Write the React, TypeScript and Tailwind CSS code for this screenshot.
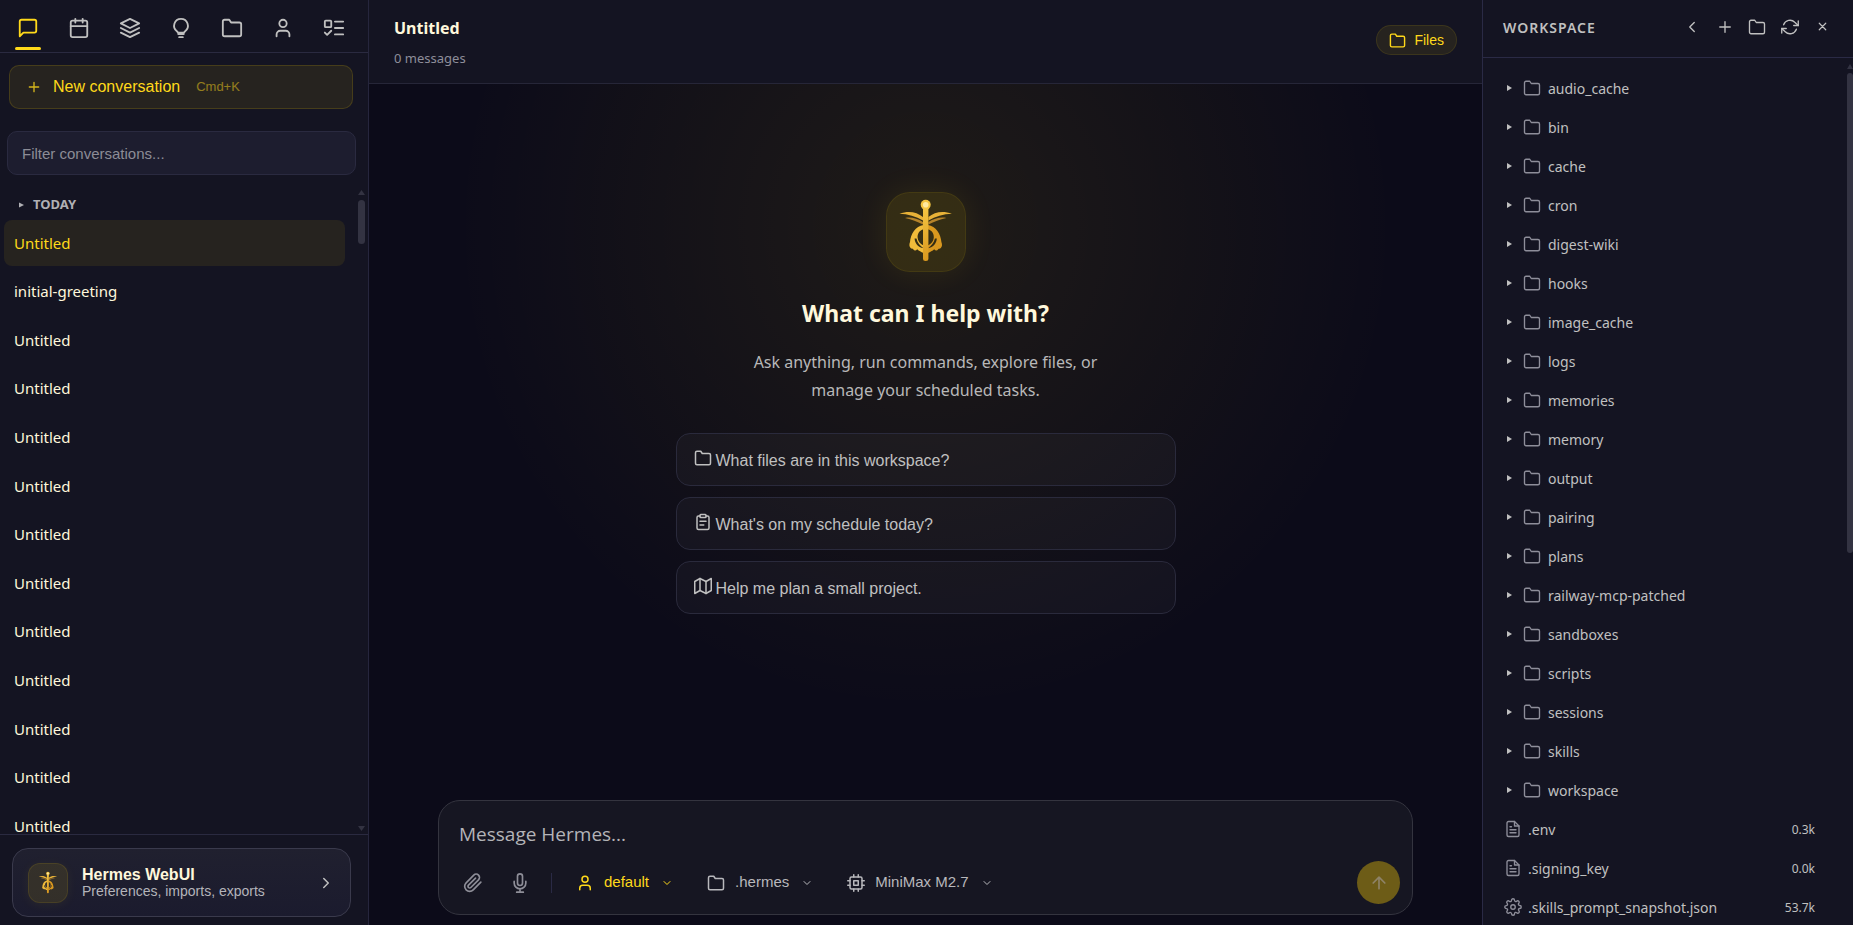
import React, { useState } from "react";

type IconProps = { size?: number; stroke?: number; className?: string; children: React.ReactNode };

function Icon({ size = 18, stroke = 2, className = "", children }: IconProps) {
  return (
    <svg
      width={size}
      height={size}
      viewBox="0 0 24 24"
      fill="none"
      stroke="currentColor"
      strokeWidth={stroke}
      strokeLinecap="round"
      strokeLinejoin="round"
      className={`shrink-0 ${className}`}
      aria-hidden="true"
    >
      {children}
    </svg>
  );
}

const glyph = {
  chat: <path d="M21 15a2 2 0 0 1-2 2H7l-4 4V5a2 2 0 0 1 2-2h14a2 2 0 0 1 2 2z" />,
  calendar: (
    <>
      <rect x="3" y="4" width="18" height="18" rx="2" />
      <path d="M16 2v4M8 2v4M3 10h18" />
    </>
  ),
  layers: (
    <>
      <path d="M12 2 2 7l10 5 10-5z" />
      <path d="m2 12 10 5 10-5" />
      <path d="m2 17 10 5 10-5" />
    </>
  ),
  bulb: (
    <>
      <path d="M10 22h4" />
      <path d="M9 18.5h6" />
      <path d="M12 2a7.5 7.5 0 0 0-4.5 13.5c.6.5 1 1 1 1.5h7c0-.5.4-1 1-1.5A7.5 7.5 0 0 0 12 2z" />
    </>
  ),
  folder: <path d="M22 19a2 2 0 0 1-2 2H4a2 2 0 0 1-2-2V5a2 2 0 0 1 2-2h5l2 3h9a2 2 0 0 1 2 2z" />,
  user: (
    <>
      <path d="M19 21v-2a4 4 0 0 0-4-4H9a4 4 0 0 0-4 4v2" />
      <circle cx="12" cy="7" r="4" />
    </>
  ),
  todo: (
    <>
      <rect x="2" y="4" width="7" height="7" rx="1" />
      <path d="m2 17 2.5 2.5L9 15M13 5h9M13 12h9M13 19h9" />
    </>
  ),
  plus: <path d="M12 5v14M5 12h14" />,
  chevronRight: <path d="m9 18 6-6-6-6" />,
  chevronLeft: <path d="m15 18-6-6 6-6" />,
  chevronDown: <path d="m6 9 6 6 6-6" />,
  refresh: (
    <>
      <path d="M23 4v6h-6M1 20v-6h6" />
      <path d="M3.51 9a9 9 0 0 1 14.85-3.36L23 10M1 14l4.64 4.36A9 9 0 0 0 20.49 15" />
    </>
  ),
  clipboard: (
    <>
      <path d="M16 4h2a2 2 0 0 1 2 2v14a2 2 0 0 1-2 2H6a2 2 0 0 1-2-2V6a2 2 0 0 1 2-2h2" />
      <rect x="8" y="2" width="8" height="4" rx="1" />
      <path d="M8 11h8M8 16h5" />
    </>
  ),
  map: (
    <>
      <path d="M1 6v16l7-4 8 4 7-4V2l-7 4-8-4z" />
      <path d="M8 2v16M16 6v16" />
    </>
  ),
  clip: (
    <path d="m21.44 11.05-9.19 9.19a6 6 0 0 1-8.49-8.49l9.19-9.19a4 4 0 0 1 5.66 5.66l-9.2 9.19a2 2 0 0 1-2.83-2.83l8.49-8.48" />
  ),
  mic: (
    <>
      <path d="M12 1a3 3 0 0 0-3 3v8a3 3 0 0 0 6 0V4a3 3 0 0 0-3-3z" />
      <path d="M19 10v2a7 7 0 0 1-14 0v-2M12 19v4M8 23h8" />
    </>
  ),
  cpu: (
    <>
      <rect x="4" y="4" width="16" height="16" rx="2" />
      <rect x="9" y="9" width="6" height="6" />
      <path d="M9 1v3M15 1v3M9 20v3M15 20v3M20 9h3M20 15h3M1 9h3M1 15h3" />
    </>
  ),
  arrowUp: <path d="M12 19V5M5 12l7-7 7 7" />,
  file: (
    <>
      <path d="M14 2H6a2 2 0 0 0-2 2v16a2 2 0 0 0 2 2h12a2 2 0 0 0 2-2V8z" />
      <path d="M14 2v6h6M16 13H8M16 17H8M10 9H8" />
    </>
  ),
  gear: (
    <>
      <circle cx="12" cy="12" r="3" />
      <path d="M19.4 15a1.65 1.65 0 0 0 .33 1.82l.06.06a2 2 0 1 1-2.83 2.83l-.06-.06a1.65 1.65 0 0 0-1.82-.33 1.65 1.65 0 0 0-1 1.51V21a2 2 0 0 1-4 0v-.09A1.65 1.65 0 0 0 9 19.4a1.65 1.65 0 0 0-1.82.33l-.06.06a2 2 0 1 1-2.83-2.83l.06-.06a1.65 1.65 0 0 0 .33-1.82 1.65 1.65 0 0 0-1.51-1H3a2 2 0 0 1 0-4h.09A1.65 1.65 0 0 0 4.6 9a1.65 1.65 0 0 0-.33-1.82l-.06-.06a2 2 0 1 1 2.83-2.83l.06.06a1.65 1.65 0 0 0 1.82.33H9a1.65 1.65 0 0 0 1-1.51V3a2 2 0 0 1 4 0v.09a1.65 1.65 0 0 0 1 1.51 1.65 1.65 0 0 0 1.82-.33l.06-.06a2 2 0 1 1 2.83 2.83l-.06.06a1.65 1.65 0 0 0-.33 1.82V9a1.65 1.65 0 0 0 1.51 1H21a2 2 0 0 1 0 4h-.09a1.65 1.65 0 0 0-1.51 1z" />
    </>
  ),
};

const snake =
  "M37.5 33C29.5 34 24.5 42.5 24 50c-1 2.5-.8 4.5.6 6 1 .9 2 .4 2.6 1.2 1.2 1.6 2.6 1.6 4 0 1.8 1.6 3.8 2.8 6.3 3.8V53.5C34 52 31.8 49 31.6 45.5 31.4 41.5 33.5 38.2 37.5 37.2zM28.6 46.5c.2 4.8 3.2 8.5 8.9 9.8-3.4-2.6-6.2-5.4-7-9.8z";
const wings = "M13.5 21.8C22 18.4 31 19.8 37 25v3.6C30 24.6 22 22 13.5 21.8z";
const lowerWings = "M19 26c6-1.2 12 .3 18 4v2.6C31 29.6 26 27.4 19 26z";

function Caduceus({ size, id }: { size: number; id: string }) {
  return (
    <svg width={size} height={size} viewBox="0 0 80 80" className="shrink-0" aria-hidden="true">
      <defs>
        <linearGradient id={id} x1="0" y1="0" x2="0" y2="1">
          <stop offset="0" stopColor="#f5c542" />
          <stop offset="1" stopColor="#d9981f" />
        </linearGradient>
      </defs>
      <g>
        <path d={wings} fill="#e8b238" />
        <path d={lowerWings} fill="#b5832a" />
        <path d={snake} fill="#f0bb3a" fillRule="evenodd" />
      </g>
      <g transform="translate(79.4 0) scale(-1 1)">
        <path d={wings} fill="#e8b238" />
        <path d={lowerWings} fill="#b5832a" />
        <path d={snake} fill="#d9981f" fillRule="evenodd" />
      </g>
      <rect x="37" y="15" width="5.4" height="54" rx="2.5" fill={`url(#${id})`} />
      <circle cx="39.7" cy="12.7" r="5" fill="#f5c542" />
      <circle cx="39.7" cy="12.7" r="2.8" fill="#ffe9a0" />
    </svg>
  );
}

const tabs = [
  { label: "Chat", icon: glyph.chat },
  { label: "Tasks", icon: glyph.calendar },
  { label: "Skills", icon: glyph.layers },
  { label: "Memory", icon: glyph.bulb },
  { label: "Spaces", icon: glyph.folder },
  { label: "Profiles", icon: glyph.user },
  { label: "Todos", icon: glyph.todo },
];

const conversations = [
  "Untitled",
  "initial-greeting",
  "Untitled",
  "Untitled",
  "Untitled",
  "Untitled",
  "Untitled",
  "Untitled",
  "Untitled",
  "Untitled",
  "Untitled",
  "Untitled",
  "Untitled",
];

const folders = [
  "audio_cache",
  "bin",
  "cache",
  "cron",
  "digest-wiki",
  "hooks",
  "image_cache",
  "logs",
  "memories",
  "memory",
  "output",
  "pairing",
  "plans",
  "railway-mcp-patched",
  "sandboxes",
  "scripts",
  "sessions",
  "skills",
  "workspace",
];

const files = [
  { name: ".env", size: "0.3k", icon: glyph.file },
  { name: ".signing_key", size: "0.0k", icon: glyph.file },
  { name: ".skills_prompt_snapshot.json", size: "53.7k", icon: glyph.gear },
];

const suggestions = [
  { text: "What files are in this workspace?", icon: glyph.folder },
  { text: "What's on my schedule today?", icon: glyph.clipboard },
  { text: "Help me plan a small project.", icon: glyph.map },
];

const arial = "font-['Liberation_Sans',Arial,sans-serif]";

function Sidebar() {
  const [tab, setTab] = useState(0);
  const [active, setActive] = useState(0);
  return (
    <aside className="flex w-[369px] shrink-0 flex-col border-r border-[#2a2a45]/80 bg-[#141422]">
      <nav className="flex h-[53px] shrink-0 border-b border-[#2a2a40] pr-[9px] pl-0.5">
        {tabs.map((t, i) => (
          <button
            key={t.label}
            aria-label={t.label}
            onClick={() => setTab(i)}
            className={`relative flex flex-1 items-center justify-center pt-1 ${i === tab ? "text-[#ffd91a]" : "text-[#c0c0c0]"}`}
          >
            <Icon size={22}>{t.icon}</Icon>
            {i === tab && <span className="absolute bottom-0.5 h-[3px] w-[26px] rounded-sm bg-[#ffd91a]" />}
          </button>
        ))}
      </nav>
      <div className="px-[9px] pt-3">
        <button
          className={`flex h-11 w-[344px] items-center rounded-[10px] border border-[#ffd700]/15 bg-[#ffd700]/8 pl-4 text-base text-[#ffd91a] ${arial}`}
        >
          <Icon size={16} className="text-[#ffd91a]/80">{glyph.plus}</Icon>
          <span className="ml-[11px]">New conversation</span>
          <span className="ml-4 text-[13px] text-[#ffd91a]/50">Cmd+K</span>
        </button>
      </div>
      <div className="px-[7px] pt-[22px]">
        <input
          type="text"
          aria-label="Filter conversations"
          placeholder="Filter conversations..."
          className={`h-11 w-[349px] rounded-[10px] border border-[#2a2a40] bg-[#1d1d2f] px-[14px] text-[15px] text-[#fff8dc] outline-none placeholder:text-[#8c8c96] ${arial}`}
        />
      </div>
      <div className="relative flex min-h-0 flex-1 flex-col overflow-hidden pr-[23px] pl-1">
        <button className="mt-[17px] mb-0.5 flex h-[26px] shrink-0 items-center pl-[15px] text-[13px] font-bold text-[#b0b0b4]">
          <svg width="5" height="6" viewBox="0 0 5 6" fill="currentColor" aria-hidden="true">
            <path d="M0 .5 5 3 0 5.5z" />
          </svg>
          <span className="ml-[9px]">TODAY</span>
        </button>
        <ul className="-mb-[15px] flex flex-1 flex-col gap-[3px]">
          {conversations.map((name, i) => (
            <li key={i} className="flex min-h-10 flex-1">
              <button
                onClick={() => setActive(i)}
                className={`w-full rounded-lg px-[10px] text-left text-[15px] ${i === active ? "bg-[#ffd700]/8 text-[#ffd91a]" : "text-[#fff8dc]"}`}
              >
                {name}
              </button>
            </li>
          ))}
        </ul>
        <div className="absolute top-[15px] right-[3px] bottom-[3px] flex w-[7px] flex-col items-center text-[#333342]" aria-hidden="true">
          <svg width="7" height="6" viewBox="0 0 7 6" fill="currentColor">
            <path d="M3.5 0 7 5H0z" />
          </svg>
          <span className="mt-1 h-11 w-[7px] rounded-full bg-[#333342]" />
          <svg width="7" height="6" viewBox="0 0 7 6" fill="currentColor" className="mt-auto">
            <path d="M3.5 6 0 1h7z" />
          </svg>
        </div>
      </div>
      <div className="shrink-0 border-t border-[#2a2a40] pt-[13px] pr-[17px] pb-2 pl-3">
        <button
          className={`flex h-[69px] w-full items-center rounded-2xl border border-[#3a3a4c] bg-linear-to-b from-[#20202f] to-[#1b1b2e] px-[15px] text-left ${arial}`}
        >
          <span className="flex size-10 items-center justify-center rounded-xl border border-[#ffd700]/10 bg-[#ffd700]/10 shadow-[0_2px_12px_rgba(255,215,0,0.06)]">
            <Caduceus size={28} id="gold-small" />
          </span>
          <span className="ml-[14px] flex flex-1 flex-col">
            <span className="text-base leading-[17px] font-bold text-[#fff8dc]">Hermes WebUI</span>
            <span className="text-sm leading-[17px] text-[#b4b4ba]">Preferences, imports, exports</span>
          </span>
          <Icon size={18} className="text-[#c0c0c0]">{glyph.chevronRight}</Icon>
        </button>
      </div>
    </aside>
  );
}

function Composer() {
  const chip = `flex items-center text-[15px] ${arial}`;
  return (
    <div className="mx-auto flex w-[calc(100%-138px)] max-w-[975px] flex-col rounded-[22px] border border-[#34343f] bg-[#161622]">
      <textarea
        rows={1}
        aria-label="Message"
        placeholder="Message Hermes..."
        className="mt-[19px] h-7 resize-none bg-transparent px-5 font-['Open_Sans','Noto_Sans',sans-serif] text-[19px] leading-7 text-[#fff8dc] outline-none placeholder:text-[#b4b4b8]"
      />
      <div className="mt-3 mb-[9px] flex h-[45px] items-center pr-3 pl-6 text-[#b8b8bc]">
        <button aria-label="Attach files">
          <Icon size={20} className="text-[#8e8e98]">{glyph.clip}</Icon>
        </button>
        <button aria-label="Voice input" className="ml-[27px]">
          <Icon size={20} className="text-[#8e8e98]">{glyph.mic}</Icon>
        </button>
        <span className="ml-[21px] h-5 w-px bg-[#2a2a45]" />
        <button className={`${chip} ml-6 text-[#ffd91a]`}>
          <Icon size={18}>{glyph.user}</Icon>
          <span className="ml-[10px]">default</span>
          <Icon size={12} className="ml-3">{glyph.chevronDown}</Icon>
        </button>
        <button className={`${chip} ml-[34px]`}>
          <Icon size={18}>{glyph.folder}</Icon>
          <span className="ml-[10px]">.hermes</span>
          <Icon size={12} className="ml-3">{glyph.chevronDown}</Icon>
        </button>
        <button className={`${chip} ml-[34px]`}>
          <Icon size={18}>{glyph.cpu}</Icon>
          <span className="ml-[10px]">MiniMax M2.7</span>
          <Icon size={12} className="ml-3">{glyph.chevronDown}</Icon>
        </button>
        <button
          aria-label="Send"
          className="ml-auto flex size-[43px] items-center justify-center rounded-full bg-[#6d5c17] text-[#8e8368]"
        >
          <Icon size={20}>{glyph.arrowUp}</Icon>
        </button>
      </div>
    </div>
  );
}

function Main() {
  return (
    <main className="flex min-w-0 flex-1 flex-col bg-[#0c0b19]">
      <header className="flex h-[84px] shrink-0 justify-between border-b border-[#262638] bg-[#141422] px-[25px]">
        <div className="pt-4">
          <h1 className="text-base leading-6 font-bold text-[#fff8dc]">Untitled</h1>
          <p className="mt-2 text-[13px] leading-5 text-[#8e8e9a]">0 messages</p>
        </div>
        <button
          className={`mt-[25px] flex h-[30px] items-center gap-2 rounded-full border border-[#ffd700]/10 bg-[#ffd700]/8 px-3 text-sm text-[#ffd91a] ${arial}`}
        >
          <Icon size={17}>{glyph.folder}</Icon>
          Files
        </button>
      </header>
      <section className="flex min-h-0 flex-1 flex-col">
        <div className="flex flex-1 flex-col items-center bg-[radial-gradient(ellipse_at_50%_20%,rgba(255,215,0,0.08),transparent_60%)] pt-[108px]">
          <span className="flex size-20 items-center justify-center rounded-3xl border border-[#ffd700]/8 bg-[#ffd700]/10 shadow-[0_0_32px_rgba(255,215,0,0.08)]">
            <Caduceus size={80} id="gold-large" />
          </span>
          <h2 className="mt-[23px] text-[23px] leading-9 font-bold text-[#fff8dc]">What can I help with?</h2>
          <p className="mt-[17px] w-[370px] text-center text-base leading-7 text-[#b8b8b8]">
            Ask anything, run commands, explore files, or manage your scheduled tasks.
          </p>
          <div className="mt-[29px] flex w-[500px] flex-col gap-[11px]">
            {suggestions.map((s) => (
              <button
                key={s.text}
                className={`flex h-[53px] items-center gap-1 rounded-[14px] border border-[#2a2a3c] bg-white/3 px-[17px] text-base text-[#c0c0c0] ${arial}`}
              >
                <Icon size={18} className="mb-1">{s.icon}</Icon>
                <span className="pt-0.5">{s.text}</span>
              </button>
            ))}
          </div>
        </div>
        <div className="pb-[10px]">
          <Composer />
        </div>
      </section>
    </main>
  );
}

function Workspace() {
  return (
    <aside className="flex w-[371px] shrink-0 flex-col border-l border-[#2a2a45] bg-[#141422]">
      <header className="flex h-[58px] shrink-0 items-center justify-between border-b border-[#2a2a45] pr-[27px] pb-1 pl-5 text-[#c0c0c0]">
        <h2 className="pt-0.5 text-sm font-semibold tracking-[1px]">WORKSPACE</h2>
        <div className="flex items-center">
          <button aria-label="Up" className="flex w-8 justify-center">
            <Icon size={18} stroke={1.8}>{glyph.chevronLeft}</Icon>
          </button>
          <button aria-label="New file" className="flex w-[33px] justify-center">
            <Icon size={18} stroke={1.8}>{glyph.plus}</Icon>
          </button>
          <button aria-label="New folder" className="flex w-8 justify-center">
            <Icon size={18} stroke={1.8}>{glyph.folder}</Icon>
          </button>
          <button aria-label="Refresh" className="flex w-[33px] justify-center">
            <Icon size={18} stroke={1.8}>{glyph.refresh}</Icon>
          </button>
          <button aria-label="Close" className="flex w-5 justify-center pl-3">
            <Icon size={13} stroke={2.2}>
              <path d="m6 6 12 12M18 6 6 18" />
            </Icon>
          </button>
        </div>
      </header>
      <div className="relative min-h-0 flex-1 overflow-hidden pt-[11px] pr-[38px] pl-[21px]">
        <ul className="text-sm text-[#c0c0c0]">
          {folders.map((name) => (
            <li key={name}>
              <button className="flex h-[39px] w-full items-center">
                <svg width="5" height="6" viewBox="0 0 5 6" fill="currentColor" className="mb-0.5 ml-[3px]" aria-hidden="true">
                  <path d="M0 0 5 3 0 6z" />
                </svg>
                <Icon size={18} stroke={1.8} className="mb-0.5 ml-[11px] text-[#8e8e9a]">{glyph.folder}</Icon>
                <span className="ml-[7px]">{name}</span>
              </button>
            </li>
          ))}
          {files.map((f) => (
            <li key={f.name}>
              <button className="flex h-[39px] w-full items-center">
                <Icon size={18} stroke={1.8} className="mb-0.5 text-[#8e8e9a]">{f.icon}</Icon>
                <span className="ml-1.5">{f.name}</span>
                <span className="ml-auto text-xs">{f.size}</span>
              </button>
            </li>
          ))}
        </ul>
        <div className="absolute top-[6px] right-0 flex w-[6px] flex-col items-center text-[#333342]" aria-hidden="true">
          <svg width="6" height="5" viewBox="0 0 6 5" fill="currentColor">
            <path d="M3 0 6 5H0z" />
          </svg>
          <span className="mt-1 h-[480px] w-[6px] rounded-full bg-[#333342]" />
        </div>
      </div>
    </aside>
  );
}

export default function App() {
  return (
    <div className="flex h-screen overflow-hidden bg-[#0c0b19] font-['Noto_Sans',sans-serif]">
      <Sidebar />
      <Main />
      <Workspace />
    </div>
  );
}
